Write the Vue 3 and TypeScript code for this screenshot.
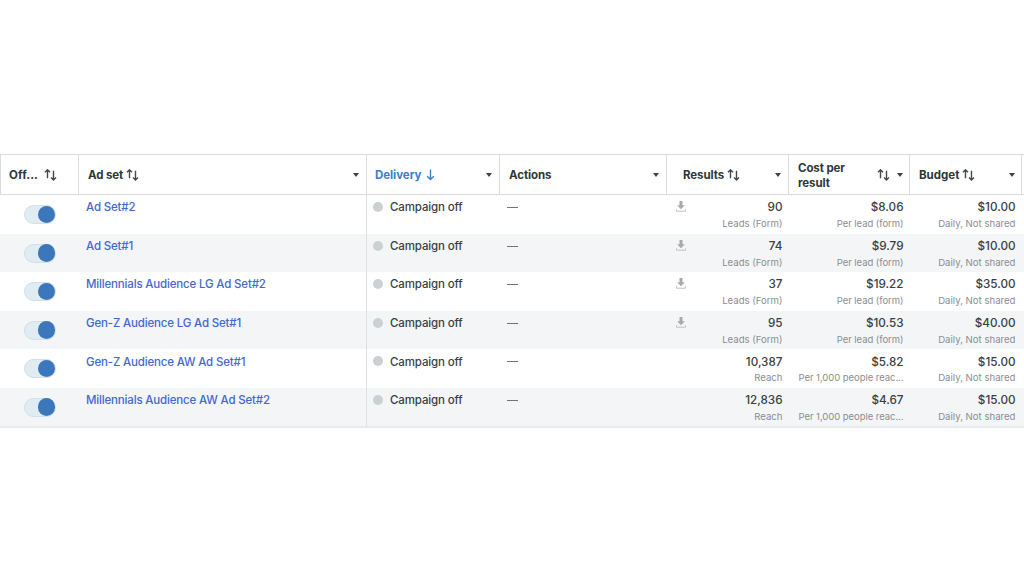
<script setup lang="ts">
interface AdSet {
  name: string
  results: string
  resultLabel: string
  cost: string
  costLabel: string
  budget: string
  download: boolean
}

const lead = { resultLabel: 'Leads (Form)', costLabel: 'Per lead (form)', download: true }
const reach = { resultLabel: 'Reach', costLabel: 'Per 1,000 people reac...', download: false }

const adSets: AdSet[] = [
  { name: 'Ad Set#2', results: '90', cost: '$8.06', budget: '$10.00', ...lead },
  { name: 'Ad Set#1', results: '74', cost: '$9.79', budget: '$10.00', ...lead },
  { name: 'Millennials Audience LG Ad Set#2', results: '37', cost: '$19.22', budget: '$35.00', ...lead },
  { name: 'Gen-Z Audience LG Ad Set#1', results: '95', cost: '$10.53', budget: '$40.00', ...lead },
  { name: 'Gen-Z Audience AW Ad Set#1', results: '10,387', cost: '$5.82', budget: '$15.00', ...reach },
  { name: 'Millennials Audience AW Ad Set#2', results: '12,836', cost: '$4.67', budget: '$15.00', ...reach },
]

const sortPath = 'M3.5 9.2V.9M1 3.3 3.5.8 6 3.3M9.5 1.8v9M7 8.4l2.5 2.5L12 8.4'
</script>

<template>
  <main class="page">
    <section class="table">
      <header class="row head">
        <div class="cell toggle-head"><span>Off...</span><svg class="sort" viewBox="0 0 13 12"><path :d="sortPath" /></svg></div>
        <div class="cell"><span>Ad set</span><svg class="sort" viewBox="0 0 13 12"><path :d="sortPath" /></svg><i class="caret" /></div>
        <div class="cell active"><span>Delivery</span><svg class="down" viewBox="0 0 9 12"><path d="M4.5 .5v10M1.2 7.2l3.3 3.3 3.3-3.3" /></svg><i class="caret" /></div>
        <div class="cell"><span>Actions</span><i class="caret" /></div>
        <div class="cell results-head"><span>Results</span><svg class="sort" viewBox="0 0 13 12"><path :d="sortPath" /></svg><i class="caret" /></div>
        <div class="cell cost-head"><span>Cost per<br>result</span><svg class="sort" viewBox="0 0 13 12"><path :d="sortPath" /></svg><i class="caret" /></div>
        <div class="cell budget-head"><span>Budget</span><svg class="sort" viewBox="0 0 13 12"><path :d="sortPath" /></svg><i class="caret" /></div>
        <div class="cell last" />
      </header>
      <div v-for="item in adSets" :key="item.name" class="row body">
        <div class="switch-cell"><span class="switch"><i /></span></div>
        <div class="name"><a>{{ item.name }}</a></div>
        <div class="delivery"><i class="dot" /><span>Campaign off</span></div>
        <div class="dash"><i /></div>
        <div class="metric results">
          <svg v-if="item.download" class="download" viewBox="0 0 10 11"><path d="M3.5 0h3v4.3h2.3L5 8.3 1.2 4.3h2.3z" /><path d="M.5 8.3v1.9h9V8.3" class="tray" /></svg>
          <strong>{{ item.results }}</strong><small>{{ item.resultLabel }}</small>
        </div>
        <div class="metric cost"><strong>{{ item.cost }}</strong><small>{{ item.costLabel }}</small></div>
        <div class="metric budget"><strong>{{ item.budget }}</strong><small>Daily, Not shared</small></div>
        <div />
      </div>
    </section>
  </main>
</template>

<style>
body { margin: 0; background: #fff; }
</style>

<style scoped>
.page { box-sizing: border-box; width: 1024px; height: 576px; padding-top: 154px; overflow: hidden; background: #fff; font-family: Inter, "Noto Sans", sans-serif; color: #3a4043; }
.table { border-bottom: 3px solid #e8eaeb; height: 271px; }
.row { display: grid; grid-template-columns: 78px 288px 133px 167px 122px 121px 112px 3px; }
.head { height: 41px; box-sizing: border-box; border-top: 1px solid #d9dbdc; border-bottom: 1px solid #d9dbdc; }
.cell { box-sizing: border-box; display: flex; align-items: center; border-left: 1px solid #d9dbdc; padding: 1px 7px 0 9px; font-size: 11.5px; font-weight: 700; line-height: 15.5px; white-space: nowrap; color: #2f3639; }
.cell span { padding-top: 2px; letter-spacing: -.1px; }
.sort { width: 13px; height: 12px; margin: -1px 0 0 3px; flex: none; fill: none; stroke: #42494c; stroke-width: 1.4; }
.cell.toggle-head { padding-left: 8px; }
.toggle-head span { letter-spacing: .1px; }
.toggle-head .sort { margin-left: 6px; }
.down { width: 9px; height: 12px; margin-left: 5px; margin-top: -1px; fill: none; stroke: #3b82d0; stroke-width: 1.4; }
.cell.active { padding-left: 8px; color: #3c7ecb; }
.active span { letter-spacing: -.05px; }
.caret { width: 0; height: 0; margin-left: auto; margin-top: -1px; border: 3.5px solid transparent; border-top: 4.5px solid #3d4244; border-bottom: 0; }
.cell.results-head { padding-left: 16px; }
.cell.cost-head { padding: 1px 6px 0 9px; }
.cost-head .sort { margin-left: auto; }
.cost-head .caret { margin-left: 7px; }
.cell.budget-head { padding-left: 9px; padding-right: 6px; }
.budget-head span { letter-spacing: 0; }
.body { height: 38.55px; font-size: 11.5px; line-height: 16px; white-space: nowrap; }
.body:nth-child(odd) { background: #f3f5f7; }
.switch-cell { padding: 10px 0 0 24px; }
.switch { box-sizing: border-box; display: flex; justify-content: flex-end; align-items: center; width: 32px; height: 19px; border: 1px solid #d3dfe6; border-radius: 10px; background: #e0ecf4; }
.switch i { width: 17.5px; height: 17.5px; border-radius: 50%; background: #3c77bb; }
.name { padding: 4.4px 0 0 8px; color: #4468cf; font-weight: 500; letter-spacing: -.17px; }
.delivery { display: flex; align-items: flex-start; padding: 4.4px 0 0 7px; border-left: 1px solid #dddfe0; box-sizing: border-box; font-weight: 500; letter-spacing: -.13px; }
.dot { width: 10px; height: 10px; margin: 2.6px 7px 0 -1px; border-radius: 50%; background: #cbd1d3; }
.dash { padding: 12px 0 0 8px; }
.dash i { display: block; width: 11px; height: 1px; background: #6f7577; }
.metric { display: flex; flex-direction: column; align-items: flex-end; padding: 4.4px 5.5px 0 0; position: relative; }
.metric strong { font-size: 11.7px; line-height: 16px; font-weight: 500; }
.metric small { font-size: 9.6px; line-height: 14px; margin-top: 1.6px; color: #8b8e90; }
.metric.cost { padding-right: 5.5px; }
.cost small { font-size: 9.5px; letter-spacing: -.05px; }
.cell.last { padding: 0; }
.download { position: absolute; left: 10px; top: 6px; width: 10px; height: 11px; fill: #a7a9aa; }
.tray { fill: none; stroke: #c0c2c3; }
</style>
